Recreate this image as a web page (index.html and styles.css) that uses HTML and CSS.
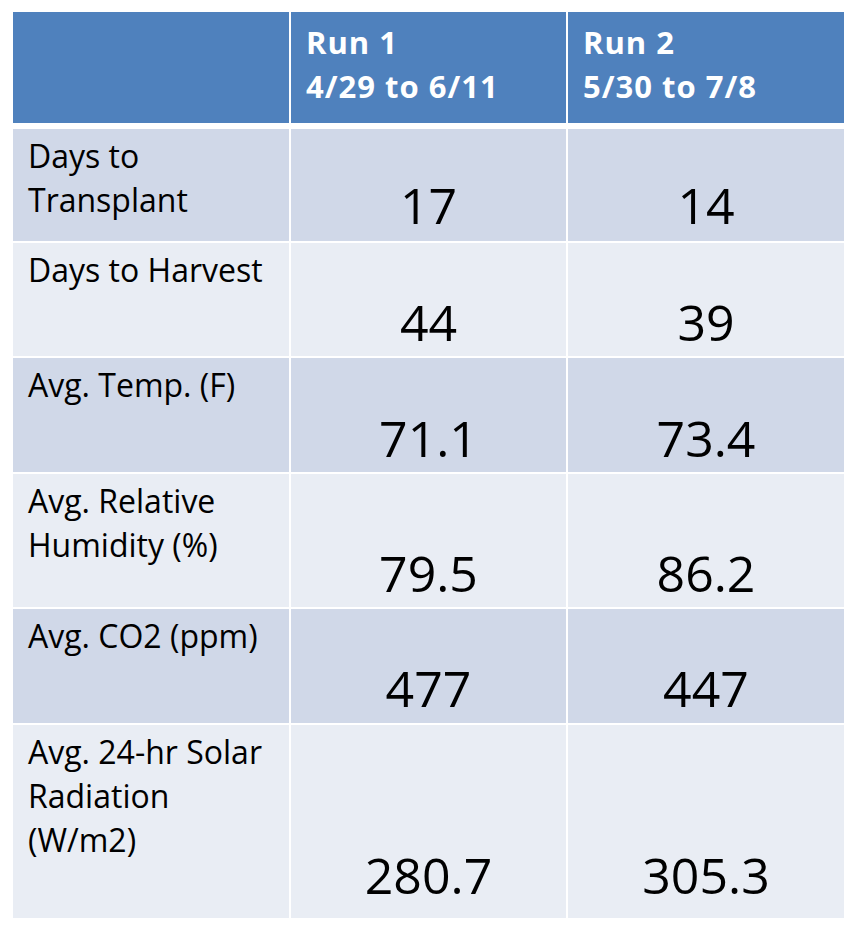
FILE: index.html
```html
<!DOCTYPE html>
<html lang="en">
<head>
<meta charset="utf-8">
<title>Run comparison</title>
<link rel="stylesheet" href="styles.css">
</head>
<body>
<div class="table">
  <div class="cell hd"></div>
  <div class="cell hd">Run 1<br>4/29 to 6/11</div>
  <div class="cell hd">Run 2<br>5/30 to 7/8</div>

  <div class="cell lbl odd">Days to<br>Transplant</div>
  <div class="cell num odd r1">17</div>
  <div class="cell num odd r1">14</div>

  <div class="cell lbl even">Days to Harvest</div>
  <div class="cell num even">44</div>
  <div class="cell num even">39</div>

  <div class="cell lbl odd">Avg. Temp. (F)</div>
  <div class="cell num odd">71.1</div>
  <div class="cell num odd">73.4</div>

  <div class="cell lbl even">Avg. Relative<br>Humidity (%)</div>
  <div class="cell num even">79.5</div>
  <div class="cell num even">86.2</div>

  <div class="cell lbl odd">Avg. CO2 (ppm)</div>
  <div class="cell num odd r5">477</div>
  <div class="cell num odd r5">447</div>

  <div class="cell lbl even">Avg. 24-hr Solar<br>Radiation<br>(W/m2)</div>
  <div class="cell num even r6">280.7</div>
  <div class="cell num even r6">305.3</div>
</div>
</body>
</html>
```

FILE: styles.css
```css
html, body {
  margin: 0;
  background: #ffffff;
}
body {
  padding: 12px 0 0 13px;
  font-family: "Open Sans", "Liberation Sans", sans-serif;
  color: #000000;
}
.table {
  display: grid;
  grid-template-columns: 276px 275px 276px;
  grid-template-rows: 115px 112px 113px 114px 133px 114px 193px;
  column-gap: 2px;
  row-gap: 2px;
  width: 831px;
}
.cell {
  box-sizing: border-box;
  padding: 0 15px;
}
.hd {
  background: #4f81bd;
  color: #ffffff;
  font-weight: 700;
  font-size: 31px;
  letter-spacing: 1px;
  line-height: 44px;
  padding-top: 8px;
  margin-bottom: 4px;
}
.odd { background: #d0d8e8; }
.even { background: #e9edf4; }
.lbl {
  font-size: 32px;
  line-height: 44px;
  padding-top: 5px;
}
.num {
  display: flex;
  align-items: flex-end;
  justify-content: center;
  font-size: 50px;
  line-height: 60px;
  padding-bottom: 4px;
}
.num.r1 { padding-bottom: 6px; }
.num.r5 { padding-bottom: 5px; }
.num.r6 { padding-bottom: 13px; }
```
